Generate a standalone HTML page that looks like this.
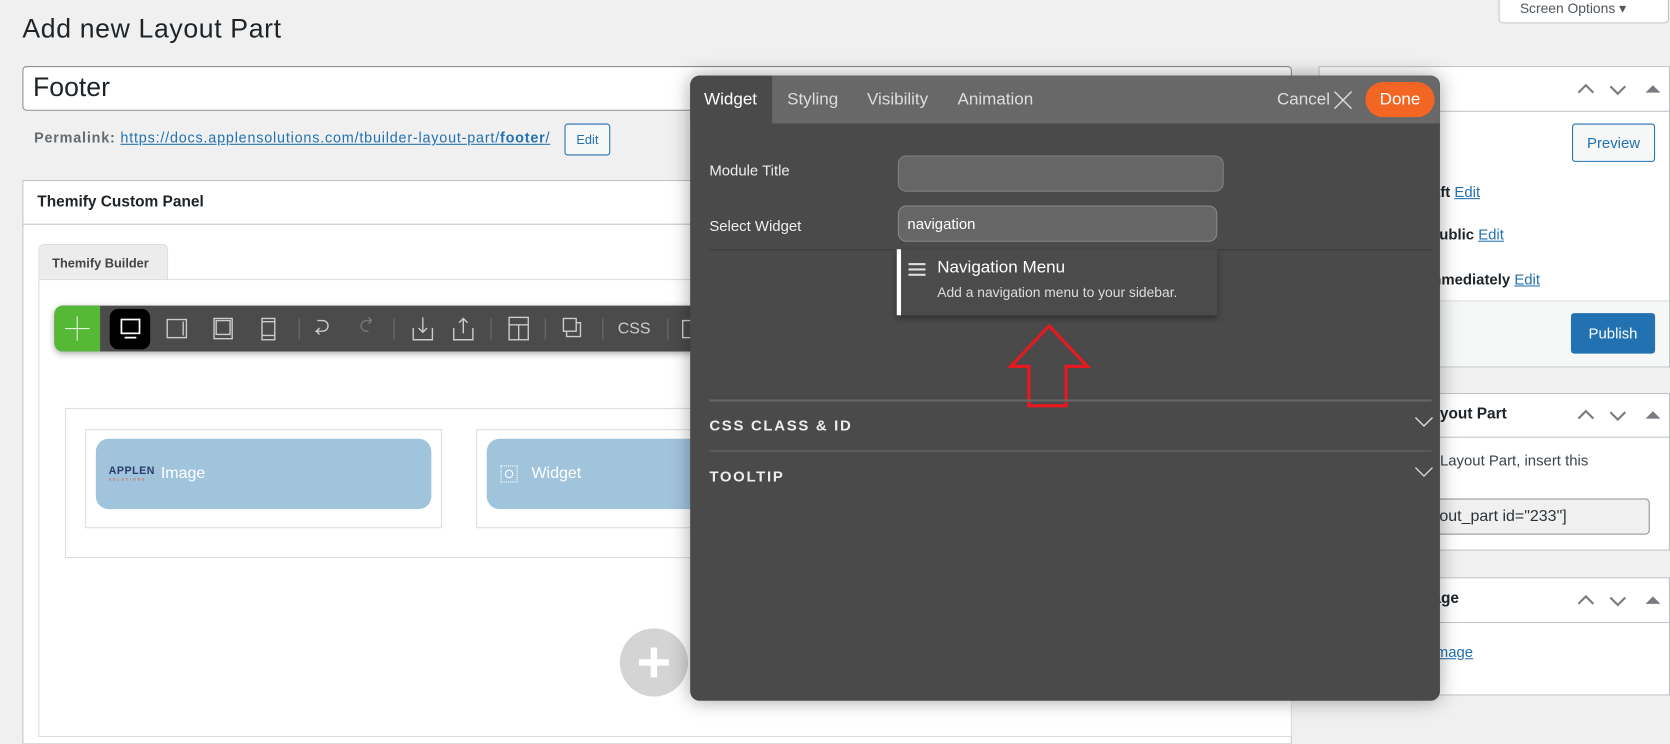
<!DOCTYPE html>
<html><head><meta charset="utf-8"><style>
*{box-sizing:border-box;margin:0;padding:0}
html,body{width:1670px;height:726px;overflow:hidden;background:#f0f0f1;font-family:"Liberation Sans",Arial,sans-serif}
#w{position:absolute;left:0;top:0;width:1568px;height:682px;transform:scale(1.06505);transform-origin:0 0}
.a{position:absolute}
.box{position:absolute;background:#fff;border:1px solid #c3c4c7}
.lnk{color:#2271b1;text-decoration:underline}
.t{color:#ddd;font-size:16px}
</style></head><body><div id="w">
<div class="a" style="left:1407px;top:-3px;width:160px;height:25px;background:#fff;border:1px solid #c3c4c7;border-radius:0 0 4px 4px;font-size:13px;color:#50575e;padding:2px 0 0 19px">Screen Options &#9662;</div>
<div class="a" style="left:21px;top:13px;font-size:25px;color:#1d2327;letter-spacing:.6px">Add new Layout Part</div>
<div class="a" style="left:21px;top:62px;width:1192px;height:42px;background:#fff;border:1px solid #8c8f94;border-radius:4px;font-size:25px;color:#1d2327;padding:5px 0 0 9px">Footer</div>
<div class="a" style="left:32px;top:122px;font-size:13.5px;letter-spacing:.75px;color:#646970;white-space:nowrap"><b>Permalink:</b> <span class="lnk">https://docs.applensolutions.com/tbuilder-layout-part/<b>footer</b>/</span></div>
<div class="a" style="left:530px;top:116px;width:43px;height:30px;border:1px solid #2271b1;border-radius:3px;background:#f6f7f7;color:#2271b1;font-size:12px;text-align:center;line-height:28px">Edit</div>
<div class="box" style="left:21px;top:169px;width:1192px;height:530px"></div>
<div class="a" style="left:21px;top:210px;width:1192px;height:1px;background:#c3c4c7"></div>
<div class="a" style="left:35px;top:182px;font-size:14.5px;font-weight:bold;color:#1d2327">Themify Custom Panel</div>
<div class="a" style="left:36px;top:229px;width:122px;height:34px;background:#ececec;border:1px solid #ddd;border-bottom:none;border-radius:6px 6px 0 0;font-size:12px;font-weight:bold;color:#444;padding:10px 0 0 12px">Themify Builder</div>
<div class="a" style="left:36px;top:262px;width:1177px;height:430px;background:#fff;border:1px solid #ddd"></div>
<div class="a" style="left:51px;top:287px;width:640px;height:43px;background:#4b4b4b;border-radius:8px;box-shadow:0 2px 6px rgba(0,0,0,.3);overflow:hidden">
 <div class="a" style="left:0;top:0;width:43px;height:43px;background:#55b837"></div>
 <div class="a" style="left:10px;top:21px;width:23px;height:1px;background:#e8f6e0"></div>
 <div class="a" style="left:21px;top:10px;width:1px;height:23px;background:#e8f6e0"></div>
 <div class="a" style="left:52px;top:3px;width:38px;height:38px;background:#000;border-radius:8px"></div>
 <svg class="a" style="left:0;top:0" width="640" height="43" fill="none" stroke="#ccc" stroke-width="1.3">
  <rect x="63" y="13" width="17" height="13" stroke="#fff" stroke-width="1.6"/><line x1="66" y1="30" x2="77" y2="30" stroke="#fff" stroke-width="1.6"/>
  <rect x="106" y="13" width="18" height="17"/><line x1="121" y1="15" x2="121" y2="28"/>
  <rect x="150" y="12" width="17" height="19"/><rect x="152" y="14" width="13" height="13"/>
  <rect x="195" y="12" width="12" height="20"/><line x1="195" y1="15" x2="207" y2="15"/><line x1="195" y1="28" x2="207" y2="28"/>
  <line x1="230" y1="12" x2="230" y2="32" stroke="#666"/>
  <path d="M247 14 h5 a5 5 0 0 1 0 10 h-6 l3 -3 m-3 3 l3 3"/>
  <path d="M298 14 l-3 -3 m3 3 l-3 3 m3 -3 h-5 a5 5 0 0 0 0 10 h2" stroke="#777"/>
  <line x1="319" y1="12" x2="319" y2="32" stroke="#666"/>
  <path d="M337 21 v11 h18 v-11 M346 11 v14 m-4 -4 l4 4 l4 -4"/>
  <path d="M375 21 v11 h18 v-11 M384 26 v-14 m-4 4 l4 -4 l4 4"/>
  <line x1="410" y1="12" x2="410" y2="32" stroke="#666"/>
  <rect x="427" y="11" width="18" height="21"/><line x1="427" y1="18" x2="445" y2="18"/><line x1="436" y1="18" x2="436" y2="32"/>
  <line x1="461" y1="12" x2="461" y2="32" stroke="#666"/>
  <rect x="478" y="12" width="12" height="12"/><path d="M490 16 h4 v13 h-13 v-5"/>
  <line x1="515" y1="12" x2="515" y2="32" stroke="#666"/>
  <line x1="576" y1="12" x2="576" y2="32" stroke="#666"/>
  <rect x="590" y="14" width="14" height="16"/>
 </svg>
 <div class="a" style="left:529px;top:13px;color:#ccc;font-size:15px">CSS</div>
</div>
<div class="a" style="left:61px;top:383px;width:1100px;height:141px;border:1px solid #ddd"></div>
<div class="a" style="left:80px;top:403px;width:335px;height:93px;border:1px solid #ddd"></div>
<div class="a" style="left:447px;top:403px;width:335px;height:93px;border:1px solid #ddd"></div>
<div class="a" style="left:90px;top:412px;width:315px;height:66px;background:#a0c4dc;border-radius:12px"></div>
<div class="a" style="left:457px;top:412px;width:315px;height:66px;background:#a0c4dc;border-radius:12px"></div>
<div class="a" style="left:102px;top:438px;font-size:10px;font-weight:bold;color:#2a3a6a;letter-spacing:.5px;line-height:10px">APPLEN<div style="font-size:3px;color:#d6603c;line-height:4px;letter-spacing:2px">SOLUTIONS</div></div>
<div class="a" style="left:151px;top:436px;font-size:15px;color:#fff">Image</div>
<div class="a" style="left:470px;top:437px;width:16px;height:16px;border:1px dotted #fff"></div>
<div class="a" style="left:474px;top:441px;width:8px;height:8px;border:1px solid #fff;border-radius:50%"></div>
<div class="a" style="left:499px;top:436px;font-size:15px;color:#fff">Widget</div>
<div class="a" style="left:582px;top:590px;width:64px;height:64px;border-radius:50%;background:#d4d4d4"></div>
<div class="a" style="left:600px;top:619px;width:28px;height:6px;background:#fff"></div>
<div class="a" style="left:611px;top:608px;width:6px;height:28px;background:#fff"></div>
<div class="box" style="left:1238px;top:62px;width:330px;height:283px"></div>
<div class="a" style="left:1238px;top:104px;width:330px;height:1px;background:#c3c4c7"></div>
<div class="a" style="left:1239px;top:282px;width:328px;height:62px;background:#f6f7f7;border-top:1px solid #dcdcde"></div>
<div class="a" style="left:1476px;top:116px;width:78px;height:36px;border:1px solid #2271b1;border-radius:3px;background:#f6f7f7;color:#2271b1;font-size:14px;text-align:center;line-height:34px">Preview</div>
<div class="a" style="left:1329px;top:172px;font-size:14px;color:#1d2327"><b>Draft</b> <span class="lnk">Edit</span></div>
<div class="a" style="left:1342px;top:212px;font-size:14px;color:#1d2327"><b>Public</b> <span class="lnk">Edit</span></div>
<div class="a" style="left:1337px;top:254px;font-size:14px;color:#1d2327"><b>Immediately</b> <span class="lnk">Edit</span></div>
<div class="a" style="left:1475px;top:294px;width:79px;height:38px;background:#2271b1;border-radius:3px;color:#fff;font-size:14px;text-align:center;line-height:38px">Publish</div>
<div class="box" style="left:1238px;top:369px;width:330px;height:148px"></div>
<div class="a" style="left:1238px;top:410px;width:330px;height:1px;background:#c3c4c7"></div>
<div class="a" style="left:1335px;top:381px;font-size:14.5px;font-weight:bold;color:#1d2327">Layout Part</div>
<div class="a" style="left:1352px;top:424px;font-size:14px;color:#3c434a">Layout Part, insert this</div>
<div class="a" style="left:1290px;top:468px;width:259px;height:34px;background:#f0f0f1;border:1px solid #8c8f94;border-radius:4px;font-size:15px;color:#2c3338;padding:7px 0 0 53px;white-space:nowrap">yout_part id="233"]</div>
<div class="box" style="left:1238px;top:542px;width:330px;height:111px"></div>
<div class="a" style="left:1238px;top:584px;width:330px;height:1px;background:#c3c4c7"></div>
<div class="a" style="left:1328px;top:554px;font-size:14.5px;font-weight:bold;color:#1d2327">Image</div>
<div class="a" style="left:1345px;top:604px;font-size:14px"><span class="lnk">image</span></div>
<svg class="a" style="left:1478px;top:74px" width="90" height="20" fill="none" stroke="#787c82" stroke-width="2"><path d="M4 13 l7 -7 l7 7 M34 7 l7 7 l7 -7"/><path d="M67 13 l7 -7 l7 7z" fill="#787c82" stroke="none"/></svg>
<svg class="a" style="left:1478px;top:380px" width="90" height="20" fill="none" stroke="#787c82" stroke-width="2"><path d="M4 13 l7 -7 l7 7 M34 7 l7 7 l7 -7"/><path d="M67 13 l7 -7 l7 7z" fill="#787c82" stroke="none"/></svg>
<svg class="a" style="left:1478px;top:554px" width="90" height="20" fill="none" stroke="#787c82" stroke-width="2"><path d="M4 13 l7 -7 l7 7 M34 7 l7 7 l7 -7"/><path d="M67 13 l7 -7 l7 7z" fill="#787c82" stroke="none"/></svg>
<div class="a" style="left:648px;top:71px;width:704px;height:587px;background:#4a4a4a;border-radius:9px;box-shadow:0 0 18px rgba(0,0,0,.35);overflow:hidden">
 <div class="a" style="left:0;top:0;width:704px;height:45px;background:#686868"></div>
 <div class="a" style="left:0;top:0;width:77px;height:45px;background:#4a4a4a"></div>
 <div class="a t" style="left:13px;top:14px;color:#fff">Widget</div>
 <div class="a t" style="left:91px;top:14px">Styling</div>
 <div class="a t" style="left:166px;top:14px">Visibility</div>
 <div class="a t" style="left:251px;top:14px">Animation</div>
 <div class="a t" style="left:551px;top:14px">Cancel</div>
 <svg class="a" style="left:604px;top:14px" width="18" height="18" stroke="#ddd" stroke-width="1.3"><path d="M1 1 L17 17 M17 1 L1 17"/></svg>
 <div class="a" style="left:634px;top:6px;width:65px;height:33px;background:#f26522;border-radius:17px;color:#fff;font-size:16px;text-align:center;line-height:33px">Done</div>
 <div class="a" style="left:18px;top:81px;font-size:14px;color:#eee">Module Title</div>
 <div class="a" style="left:195px;top:75px;width:306px;height:34px;background:#666;border:1px solid #808080;border-radius:8px"></div>
 <div class="a" style="left:18px;top:133px;font-size:14px;color:#eee">Select Widget</div>
 <div class="a" style="left:195px;top:122px;width:300px;height:34px;background:#666;border:1px solid #888;border-radius:8px;color:#fff;font-size:14px;padding:8px 0 0 8px">navigation</div>
 <div class="a" style="left:18px;top:163px;width:678px;height:1px;background:#3b3b3b"></div>
 <div class="a" style="left:194px;top:163px;width:301px;height:62px;background:#4b4b4b;border-left:4px solid #fff;box-shadow:0 3px 6px rgba(0,0,0,.4)"></div>
 <div class="a" style="left:205px;top:176px;width:16px;height:2px;background:#ddd;box-shadow:0 5px 0 #ddd,0 10px 0 #ddd"></div>
 <div class="a" style="left:232px;top:172px;font-size:16px;color:#fff">Navigation Menu</div>
 <div class="a" style="left:232px;top:196px;font-size:13px;color:#ddd">Add a navigation menu to your sidebar.</div>
 <svg class="a" style="left:0;top:0" width="704" height="587" fill="none"><polygon points="337,235 373,273 353,273 353,310 318,310 318,273 301,273" stroke="#e5191f" stroke-width="3"/></svg>
 <div class="a" style="left:18px;top:304px;width:678px;height:2px;background:#666"></div>
 <div class="a" style="left:18px;top:320px;font-size:14px;font-weight:bold;color:#eee;letter-spacing:1.6px">CSS CLASS &amp; ID</div>
 <div class="a" style="left:18px;top:352px;width:678px;height:1px;background:#666"></div>
 <div class="a" style="left:18px;top:368px;font-size:14px;font-weight:bold;color:#eee;letter-spacing:1.6px">TOOLTIP</div>
 <svg class="a" style="left:680px;top:318px" width="18" height="60" fill="none" stroke="#ddd" stroke-width="1.3"><path d="M1 3 l8 8 l8 -8 M1 50 l8 8 l8 -8"/></svg>
</div>
</div></body></html>
